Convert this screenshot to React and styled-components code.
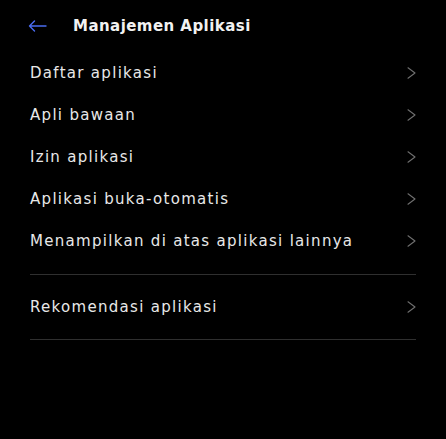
import React from 'react'
import styled, { createGlobalStyle } from 'styled-components'

const GlobalStyle = createGlobalStyle`
  html, body {
    margin: 0;
    padding: 0;
    background: #000;
  }
  body {
    font-family: "DejaVu Sans", "Liberation Sans", sans-serif;
  }
`

const Screen = styled.div`
  width: 446px;
  height: 439px;
  background: #000;
  display: flex;
  flex-direction: column;
`

const Header = styled.div`
  height: 52px;
  display: flex;
  align-items: center;
  padding-left: 28px;
  gap: 26px;
`

const BackButton = styled.div`
  width: 19px;
  height: 12px;
  display: flex;
  & > svg {
    width: 19px;
    height: 12px;
  }
`

const Title = styled.h1`
  margin: 0;
  font-size: 15px;
  font-weight: 700;
  color: #f2f2f2;
  letter-spacing: 0.45px;
`

const List = styled.div`
  display: flex;
  flex-direction: column;
  padding: 0 30px;
`

const Row = styled.div`
  height: 42px;
  display: flex;
  align-items: center;
  justify-content: space-between;
`

const Label = styled.span`
  font-size: 15px;
  color: #e8e8e8;
  letter-spacing: 1.3px;
`

const Chevron = styled.div`
  width: 9px;
  height: 12px;
  display: flex;
  & > svg {
    width: 9px;
    height: 12px;
  }
`

const Divider = styled.div`
  height: 1px;
  background: #2f2f2f;
  margin: ${(p) => p.$margin};
`

function Arrow() {
  return (
    <svg viewBox="0 0 19 12" fill="none">
      <path d="M18 6H1.5M6.5 1L1.5 6l5 5" stroke="#4a6cf0" strokeWidth="1.4" strokeLinecap="round" strokeLinejoin="round" />
    </svg>
  )
}

function ChevronIcon() {
  return (
    <svg viewBox="0 0 9 12" fill="none">
      <path d="M1 0.8L8 6 1 11.2" stroke="#707070" strokeWidth="1.1" strokeLinecap="round" strokeLinejoin="round" />
    </svg>
  )
}

function Item({ label }) {
  return (
    <Row>
      <Label>{label}</Label>
      <Chevron>
        <ChevronIcon />
      </Chevron>
    </Row>
  )
}

const items = [
  'Daftar aplikasi',
  'Apli bawaan',
  'Izin aplikasi',
  'Aplikasi buka-otomatis',
  'Menampilkan di atas aplikasi lainnya',
]

export default function App() {
  return (
    <>
      <GlobalStyle />
      <Screen>
        <Header>
          <BackButton>
            <Arrow />
          </BackButton>
          <Title>Manajemen Aplikasi</Title>
        </Header>
        <List>
          {items.map((label) => (
            <Item key={label} label={label} />
          ))}
          <Divider $margin="12px 0 11px" />
          <Item label="Rekomendasi aplikasi" />
          <Divider $margin="11px 0 0" />
        </List>
      </Screen>
    </>
  )
}
